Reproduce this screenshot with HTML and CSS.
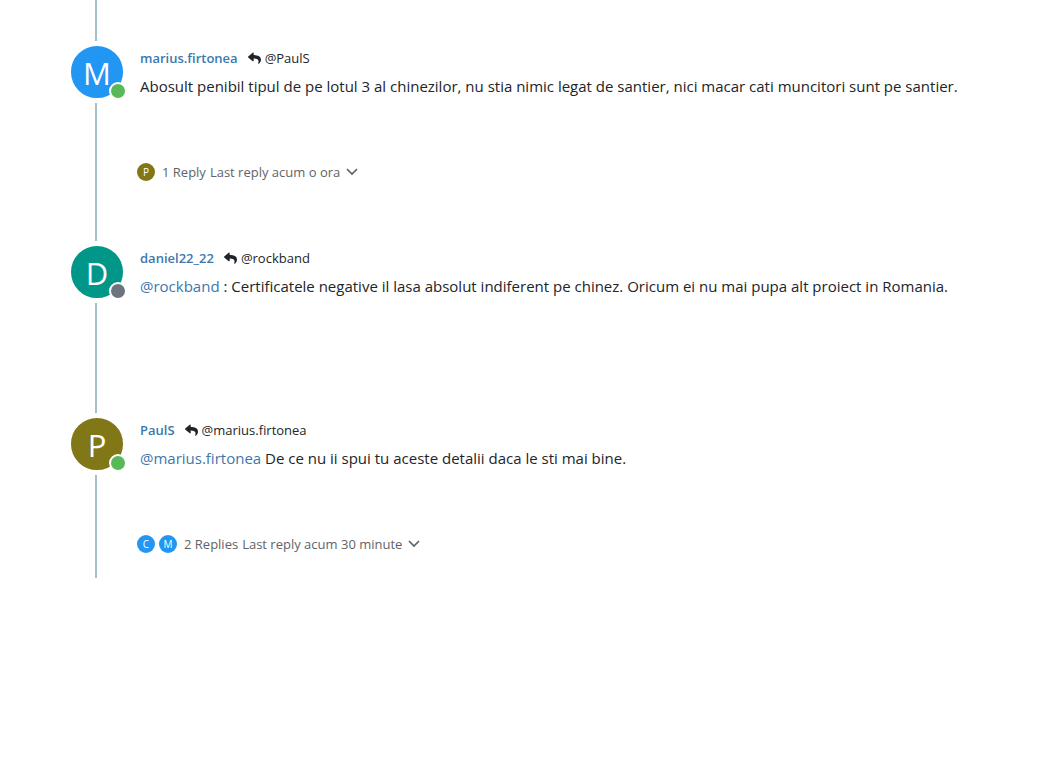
FILE: index.html
```
<!DOCTYPE html>
<html lang="ro">
<head>
  <meta charset="UTF-8" />
  <meta name="viewport" content="width=device-width, initial-scale=1" />
  <title>Topic</title>
  <link rel="stylesheet" href="styles.css">
</head>
<body>
  <svg class="sprite" aria-hidden="true">
    <symbol id="reply" viewBox="0 0 512 512">
      <path d="M8 177 184 25c15-13 40-3 40 18v80c161 2 288 34 288 186 0 61-39 122-83 153-14 10-33-2-28-19 45-145-22-183-177-186v88c0 21-24 31-40 18L8 213c-11-10-11-27 0-36z"/>
    </symbol>
    <symbol id="chevron" viewBox="0 0 12 12">
      <path d="M1 3l5 5 5-5" fill="none" stroke="currentColor" stroke-width="1.7"/>
    </symbol>
  </svg>

  <ul class="posts">
    <li class="post">
      <a href="#" class="avatar blue" aria-label="marius.firtonea">M<span class="status online"></span></a>
      <div class="post-main">
        <div class="post-header">
          <a href="#" class="username">marius.firtonea</a>
          <a href="#" class="reply-to"><svg class="icon"><use href="#reply"/></svg>@PaulS</a>
        </div>
        <p class="content">Abosult penibil tipul de pe lotul 3 al chinezilor, nu stia nimic legat de santier, nici macar cati muncitori sunt pe santier.</p>
        <button type="button" class="replies">
          <span class="mini olive">P</span>
          <span class="count">1 Reply</span>
          <span>Last reply acum o ora</span>
          <svg class="chevron"><use href="#chevron"/></svg>
        </button>
      </div>
    </li>

    <li class="post">
      <a href="#" class="avatar teal" aria-label="daniel22_22">D<span class="status offline"></span></a>
      <div class="post-main">
        <div class="post-header">
          <a href="#" class="username">daniel22_22</a>
          <a href="#" class="reply-to"><svg class="icon"><use href="#reply"/></svg>@rockband</a>
        </div>
        <p class="content"><a href="#">@rockband</a> : Certificatele negative il lasa absolut indiferent pe chinez. Oricum ei nu mai pupa alt proiect in Romania.</p>
      </div>
    </li>

    <li class="post">
      <a href="#" class="avatar olive" aria-label="PaulS">P<span class="status online"></span></a>
      <div class="post-main">
        <div class="post-header">
          <a href="#" class="username">PaulS</a>
          <a href="#" class="reply-to"><svg class="icon"><use href="#reply"/></svg>@marius.firtonea</a>
        </div>
        <p class="content"><a href="#">@marius.firtonea</a> De ce nu ii spui tu aceste detalii daca le sti mai bine.</p>
        <button type="button" class="replies">
          <span class="mini blue">C</span>
          <span class="mini blue">M</span>
          <span class="count">2 Replies</span>
          <span>Last reply acum 30 minute</span>
          <svg class="chevron"><use href="#chevron"/></svg>
        </button>
      </div>
    </li>
  </ul>
</body>
</html>
```
FILE: styles.css
```
* {
  box-sizing: border-box;
}

body {
  margin: 0;
  background: #fff;
  color: #212529;
  font-family: "Segoe UI", "Open Sans", sans-serif;
  font-size: 15px;
  line-height: 24px;
}

a {
  color: #3d77ab;
  text-decoration: none;
}

a:hover {
  text-decoration: underline;
}

.sprite {
  display: none;
}

/* the border is the timeline that runs behind the avatars */
.posts {
  list-style: none;
  margin: 0 48px 0 95px;
  padding: 41px 0 0;
  border-left: 2px solid #a5c0ca;
}

.post {
  display: flex;
  gap: 12px;
  padding-bottom: 51px;
}

.post:last-child {
  padding-bottom: 16px;
}

.avatar {
  position: relative;
  flex: none;
  width: 62px;
  height: 62px;
  margin-left: -31px;
  border: 5px solid #fff;
  border-radius: 50%;
  color: #fff;
  font-size: 31px;
  line-height: 54px;
  text-align: center;
}

.avatar:hover {
  text-decoration: none;
}

.blue {
  background-color: #2196f3;
}

.teal {
  background-color: #009688;
}

.olive {
  background-color: #827717;
}

.status {
  position: absolute;
  right: -4px;
  bottom: -2px;
  width: 18px;
  height: 18px;
  border: 2px solid #fff;
  border-radius: 50%;
}

.online {
  background: #57b957;
}

.offline {
  background: #6c757d;
}

.post-main {
  flex: 1;
  min-width: 0;
  padding-top: 5px;
}

.post-header {
  display: flex;
  flex-wrap: wrap;
  gap: 10px;
  font-size: 13px;
}

.username {
  font-weight: 600;
}

.reply-to {
  display: flex;
  align-items: center;
  gap: 4px;
  color: #212529;
}

.icon {
  width: 13px;
  height: 13px;
  fill: #212529;
}

.content {
  margin: 4px 0 0;
  padding-bottom: 64px;
}

.replies {
  display: flex;
  align-items: center;
  gap: 4px;
  margin: 0 0 8px -3px;
  padding: 0;
  border: 0;
  background: none;
  color: #5f6468;
  font: inherit;
  font-size: 13px;
  line-height: 20px;
  cursor: pointer;
}

.mini {
  width: 18px;
  height: 18px;
  border-radius: 50%;
  color: #fff;
  font-size: 10px;
  line-height: 18px;
  text-align: center;
}

.count {
  margin-left: 3px;
}

.chevron {
  width: 12px;
  height: 12px;
  margin-left: 2px;
}
```
